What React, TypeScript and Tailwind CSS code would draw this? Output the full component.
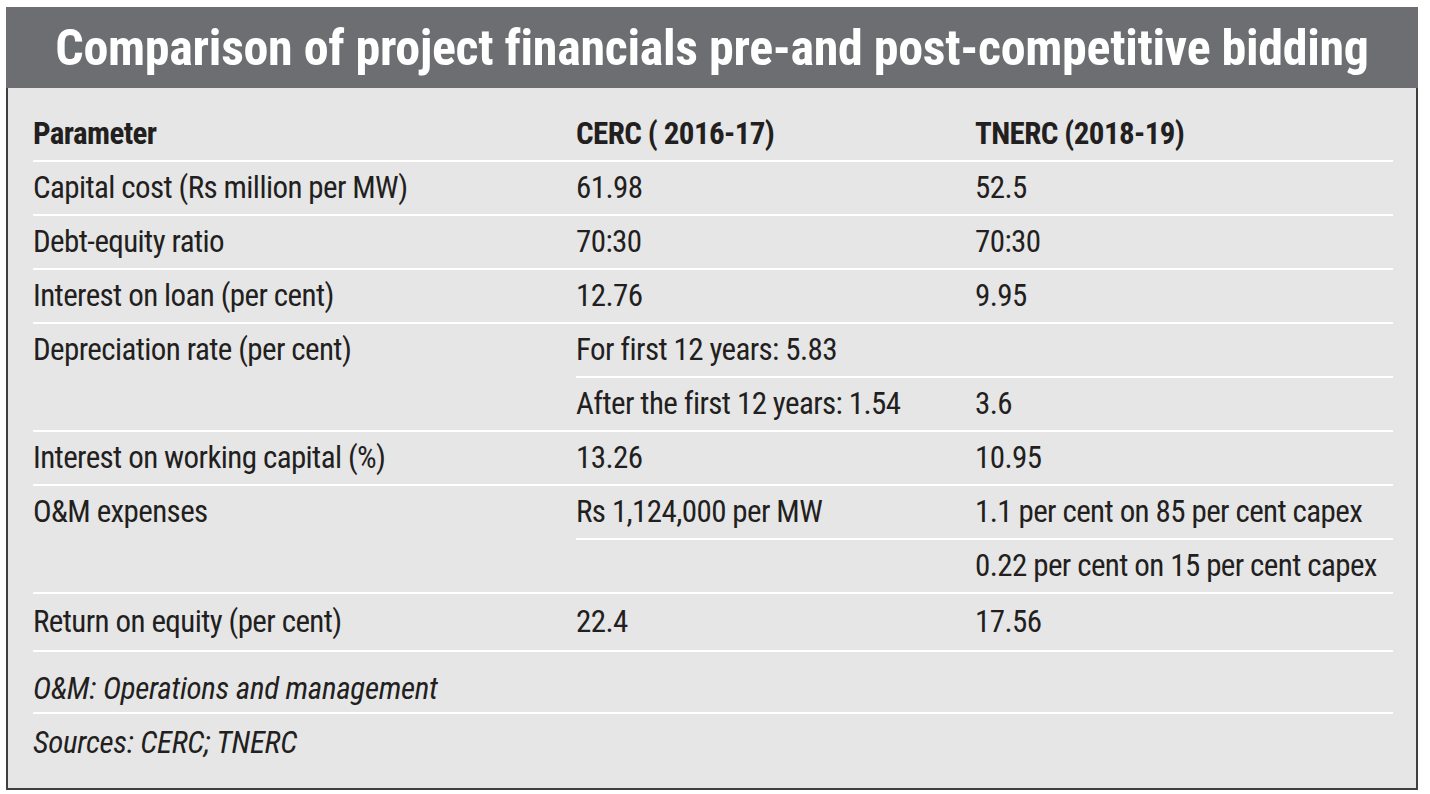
type Row = {
  label: string
  cerc: string[]
  tnerc: string[]
}

const rows: Row[] = [
  { label: 'Capital cost (Rs million per MW)', cerc: ['61.98'], tnerc: ['52.5'] },
  { label: 'Debt-equity ratio', cerc: ['70:30'], tnerc: ['70:30'] },
  { label: 'Interest on loan (per cent)', cerc: ['12.76'], tnerc: ['9.95'] },
  {
    label: 'Depreciation rate (per cent)',
    cerc: ['For first 12 years: 5.83', 'After the first 12 years: 1.54'],
    tnerc: ['', '3.6'],
  },
  { label: 'Interest on working capital (%)', cerc: ['13.26'], tnerc: ['10.95'] },
  {
    label: 'O&M expenses',
    cerc: ['Rs 1,124,000 per MW', ''],
    tnerc: ['1.1 per cent on 85 per cent capex', '0.22 per cent on 15 per cent capex'],
  },
]

const Cell = ({ children }: { children: React.ReactNode }) => (
  <div className="whitespace-nowrap">{children}</div>
)

const DataRow = ({ label, cerc, tnerc }: Row) => {
  if (cerc.length === 1) {
    return (
      <div className="grid h-[54px] grid-cols-[543px_399px_1fr] items-center border-b-2 border-white">
        <Cell>{label}</Cell>
        <Cell>{cerc[0]}</Cell>
        <Cell>{tnerc[0]}</Cell>
      </div>
    )
  }
  return (
    <div className="grid grid-cols-[543px_1fr] border-b-2 border-white">
      <div className="flex h-[52px] items-center whitespace-nowrap">{label}</div>
      <div className="flex flex-col">
        {cerc.map((c, i) => (
          <div
            key={i}
            className={
              i < cerc.length - 1
                ? 'grid h-[54px] grid-cols-[399px_1fr] items-center border-b-2 border-white'
                : 'grid h-[52px] grid-cols-[399px_1fr] items-center'
            }
          >
            <Cell>{c}</Cell>
            <Cell>{tnerc[i]}</Cell>
          </div>
        ))}
      </div>
    </div>
  )
}

export default function App() {
  return (
    <div className="min-h-[794px] w-[1430px] bg-white pl-[6px] pt-[7px] font-['Roboto',sans-serif] [font-stretch:75%]">
      <div className="flex h-[783px] w-[1412px] flex-col border-x-2 border-b-2 border-[#3f3f41] bg-[#e6e6e7]">
        <div className="-mx-[2px] flex h-[81px] items-center justify-center bg-[#6d6e71]">
          <h1 className="whitespace-nowrap pt-[1px] text-[50px] font-bold leading-none tracking-[-0.3px] text-white">
            Comparison of project financials pre-and post-competitive bidding
          </h1>
        </div>
        <div className="pl-[25px] pr-[23px] text-[31px] leading-[36px] tracking-[-0.6px] text-[#231f20]">
          <div className="grid h-[74px] grid-cols-[543px_399px_1fr] items-end border-b-2 border-white pb-[8px] font-bold">
            <Cell>Parameter</Cell>
            <Cell>CERC ( 2016-17)</Cell>
            <Cell>TNERC (2018-19)</Cell>
          </div>
          {rows.map((r) => (
            <DataRow key={r.label} {...r} />
          ))}
          <div className="grid h-[58px] grid-cols-[543px_399px_1fr] items-center border-b-2 border-white">
            <Cell>Return on equity (per cent)</Cell>
            <Cell>22.4</Cell>
            <Cell>17.56</Cell>
          </div>
          <div className="flex h-[62px] items-end border-b-2 border-white pb-[5px] italic tracking-[-0.3px]">
            O&amp;M: Operations and management
          </div>
          <div className="pt-[11px] italic tracking-[-0.3px]">Sources: CERC; TNERC</div>
        </div>
      </div>
    </div>
  )
}
